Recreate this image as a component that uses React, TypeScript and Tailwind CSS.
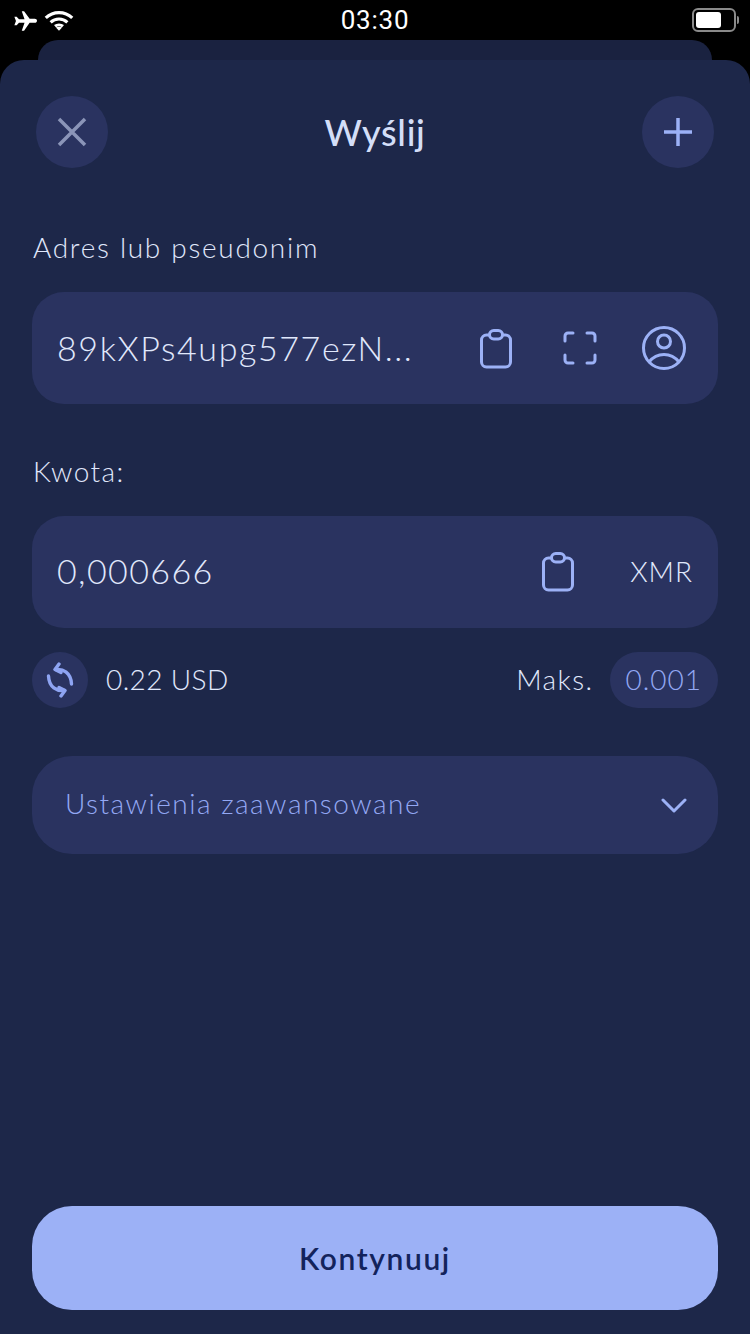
function ClipboardIcon() {
  return (
    <svg width="32" height="40" viewBox="0 0 32 40" fill="none" stroke="#9cb1f6" strokeWidth="3">
      <rect x="1.500" y="6" width="29" height="32" rx="5" />
      <rect x="9.500" y="1.500" width="13" height="8.500" rx="4.250" fill="#2a3360" />
    </svg>
  )
}

function ScanIcon() {
  return (
    <svg width="34" height="34" viewBox="0 0 34 34" fill="none" stroke="#9cb1f6" strokeWidth="3" strokeLinecap="round">
      <path d="M2 10V5a3 3 0 0 1 3-3h5" />
      <path d="M24 2h5a3 3 0 0 1 3 3v5" />
      <path d="M32 24v5a3 3 0 0 1-3 3h-5" />
      <path d="M10 32H5a3 3 0 0 1-3-3v-5" />
    </svg>
  )
}

function ContactIcon() {
  return (
    <svg width="46" height="46" viewBox="0 0 46 46" fill="none" stroke="#9cb1f6" strokeWidth="3">
      <circle cx="23" cy="23" r="20.500" />
      <circle cx="23" cy="16.500" r="6.500" />
      <path d="M8 37c4-5 9-7.500 15-7.500S34 32 38 37" />
    </svg>
  )
}

function SwapIcon() {
  return (
    <svg width="28" height="36" viewBox="0 0 28 36" fill="none" stroke="#8ea4f2" strokeWidth="3.400" strokeLinecap="round" strokeLinejoin="round">
      <path d="M13 2 9 7.500l6 3" />
      <path d="M9.500 7.500C17 6.500 25 10.500 25.500 22" />
      <path d="M15 34l4-5.500-6-3" />
      <path d="M18.500 28.500C11 29.500 3 25.500 2.500 14" />
    </svg>
  )
}

export default function App() {
  return (
    <div className="w-[750px] h-[1334px] bg-black overflow-hidden flex flex-col font-['Lato',sans-serif] font-light">
      {/* status bar */}
      <div className="h-10 flex items-center justify-between px-[10px] text-white relative shrink-0">
        <div className="flex items-center gap-[7px] mt-[1px] ml-[3px]">
          <svg width="24" height="22" viewBox="0 0 26 22" fill="white">
            <path d="M9.500 0.500h2.500l6 8h5.500c1.500 0 2.500 1 2.500 2.300s-1 2.200-2.500 2.200H18l-6 8.500H9.500l3-8.500H6.500L4 15.500H1.500L3.200 11 1.500 6.500H4l2.500 2.500h6z" />
          </svg>
          <svg width="30" height="22" viewBox="0 0 34 24" fill="none" stroke="white" strokeWidth="3.600">
            <path d="M2 8.500c8.500-8 21.500-8 30 0" />
            <path d="M7.500 13.500c5.500-5 13.500-5 19 0" />
            <path d="M12.500 18c2.500-2 6.500-2 9 0" />
            <path d="M17 23l-3.500-3.500c2-1.500 5-1.500 7 0z" fill="white" stroke="none" />
          </svg>
        </div>
        <span className="absolute left-0 right-0 text-center text-[26px] leading-none font-normal font-['Roboto',sans-serif] tracking-[0.8px]">
          03:30
        </span>
        <div className="flex items-center gap-[1px] mr-[1px]">
          <div className="w-[44px] h-[24px] rounded-[6px] border-2 border-[#8a8a8a] p-[2px]">
            <div className="w-[25px] h-full bg-white rounded-[3px]" />
          </div>
          <div className="w-[2px] h-[8px] bg-[#8a8a8a] rounded-r-full" />
        </div>
      </div>

      {/* card behind the sheet */}
      <div className="mx-[38px] w-[674px] h-5 bg-[#1a2240] rounded-t-[20px] shrink-0" />

      {/* sheet */}
      <div className="flex-1 bg-[#1d2749] rounded-t-[24px] pt-9 px-8 pb-6 flex flex-col text-[#e0e8fc]">
        <div className="flex items-center justify-between px-1">
          <button className="w-[72px] h-[72px] rounded-full bg-[#2a3360] flex items-center justify-center">
            <svg width="30" height="30" viewBox="0 0 30 30" fill="none" stroke="#8b95b8" strokeWidth="3.500">
              <path d="M2 2l26 26M28 2 2 28" />
            </svg>
          </button>
          <h1 className="text-[36px] leading-none font-medium tracking-[0.7px] text-[#d3def8]">Wyślij</h1>
          <button className="w-[72px] h-[72px] rounded-full bg-[#2a3360] flex items-center justify-center">
            <svg width="30" height="30" viewBox="0 0 30 30" fill="none" stroke="#9cb1f6" strokeWidth="3.500">
              <path d="M15 1v28M1 15h28" />
            </svg>
          </button>
        </div>

        <label className="mt-[61px] mb-[27px] text-[28px] leading-9 tracking-[1.700px] pl-px">Adres lub pseudonim</label>
        <div className="h-28 rounded-[32px] bg-[#2a3360] flex items-center pl-[25px] pr-[31px]">
          <span className="flex-1 pb-0.5 text-[34px] tracking-[1.600px]">89kXPs4upg577ezN...</span>
          <div className="flex items-center">
            <div className="flex mt-[1px]"><ClipboardIcon /></div>
            <div className="ml-[51px] mr-[44px] flex"><ScanIcon /></div>
            <ContactIcon />
          </div>
        </div>

        <label className="mt-[49px] mb-[27px] text-[28px] leading-9 tracking-[1.400px] pl-px">Kwota:</label>
        <div className="h-28 rounded-[32px] bg-[#2a3360] flex items-center pl-[25px] pr-[25px]">
          <span className="flex-1 pb-1 text-[34px] tracking-[1.400px]">0,000666</span>
          <ClipboardIcon />
          <span className="ml-[56px] pb-0.5 text-[28px] tracking-[1px]">XMR</span>
        </div>

        <div className="mt-6 h-14 flex items-center">
          <button className="w-14 h-14 rounded-full bg-[#2a3360] flex items-center justify-center">
            <SwapIcon />
          </button>
          <span className="ml-[18px] flex-1 pb-0.5 text-[28px] tracking-[0.400px]">0.22 USD</span>
          <span className="pb-0.5 text-[28px] tracking-[1.400px]">Maks.</span>
          <span className="ml-4 h-14 px-4 pb-0.5 rounded-full bg-[#2a3360] flex items-center text-[28px] tracking-[1px] text-[#93a8f4]">
            0.001
          </span>
        </div>

        <div className="mt-12 h-[98px] rounded-[40px] bg-[#2a3360] flex items-center justify-between pl-[33px] pr-[30px]">
          <span className="pb-1 text-[28px] tracking-[1.500px] text-[#93a8f4]">Ustawienia zaawansowane</span>
          <svg width="28" height="16" viewBox="0 0 28 16" fill="none" stroke="#9cb1f6" strokeWidth="3" strokeLinecap="round" strokeLinejoin="round">
            <path d="M3 3l11 11L25 3" />
          </svg>
        </div>

        <button className="mt-auto h-[104px] rounded-[40px] bg-[#9cb1f6] text-[#13235c] text-[30px] font-semibold tracking-[1.600px]">
          Kontynuuj
        </button>
      </div>
    </div>
  )
}
